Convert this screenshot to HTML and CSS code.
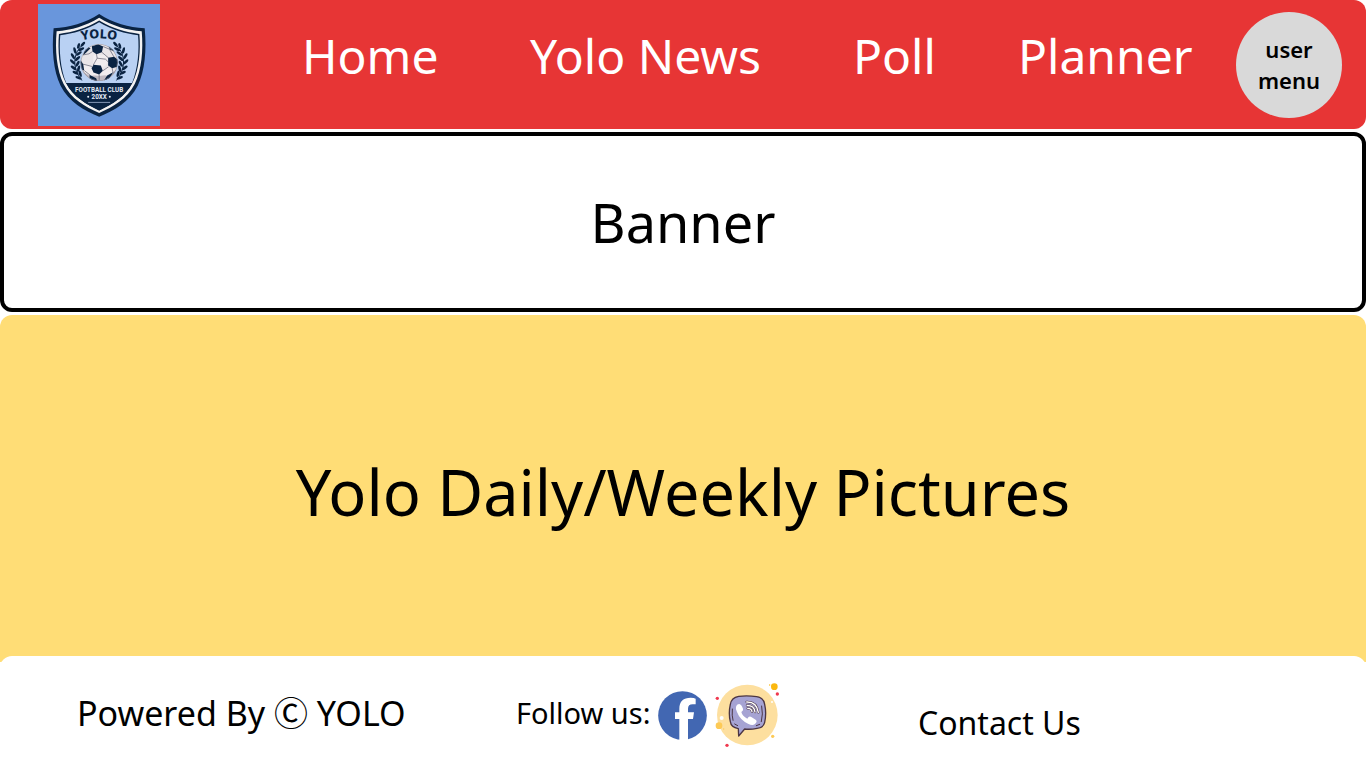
FILE: index.html
```html
<!DOCTYPE html>
<html lang="en">
<head>
<meta charset="utf-8">
<meta name="viewport" content="width=device-width, initial-scale=1">
<title>Yolo Football Club</title>
<link rel="stylesheet" href="styles.css">
</head>
<body>
<header class="site-header">
  <a class="logo" href="#" aria-label="Yolo Football Club">
    <svg viewBox="23 11 367 367" aria-hidden="true">
      <rect x="23" y="11" width="367" height="367" fill="#6996dc"/>
      <path d="M207 41C165 68 118 81 70 84C64 150 69 211 91 257C116 306 161 331 207 350C253 331 298 306 323 257C345 211 350 150 344 84C296 81 249 68 207 41Z" fill="#0a2342"/>
      <path d="M207 52C166 77 124 89 79 93C74 150 79 209 100 252C123 297 165 321 207 339C249 321 291 297 314 252C335 209 340 150 335 93C290 89 248 77 207 52Z" fill="#f3f2f2"/>
      <path d="M207 61C167 85 128 96 86 101C82 150 86 207 107 249C129 291 168 313 207 331C246 313 285 291 307 249C328 207 332 150 328 101C286 96 247 85 207 61Z" fill="#0a2342"/>
      <path d="M207 66C168 89 130 100 90 105C86 150 90 205 108 249H306C324 205 328 150 324 105C284 100 246 89 207 66Z" fill="#b9d1f3"/>
      <defs>
        <path id="arc" d="M145 123Q207 105 269 123"/>
        <g id="leaf-branch" fill="#0a2342">
          <path d="M162 130C126 157 125 204 155 241" fill="none" stroke="#0a2342" stroke-width="3"/>
          <ellipse cx="158" cy="132" rx="9" ry="4" transform="rotate(-45 158 132)"/>
          <ellipse cx="145" cy="137" rx="9" ry="4" transform="rotate(-75 145 137)"/>
          <ellipse cx="153" cy="147" rx="10" ry="4" transform="rotate(-25 153 147)"/>
          <ellipse cx="134" cy="151" rx="10" ry="4" transform="rotate(75 134 151)"/>
          <ellipse cx="146" cy="160" rx="10" ry="4" transform="rotate(-35 146 160)"/>
          <ellipse cx="128" cy="168" rx="10" ry="4" transform="rotate(60 128 168)"/>
          <ellipse cx="142" cy="175" rx="10" ry="4" transform="rotate(-45 142 175)"/>
          <ellipse cx="127" cy="185" rx="10" ry="4" transform="rotate(45 127 185)"/>
          <ellipse cx="142" cy="191" rx="10" ry="4" transform="rotate(-60 142 191)"/>
          <ellipse cx="130" cy="203" rx="10" ry="4" transform="rotate(35 130 203)"/>
          <ellipse cx="145" cy="206" rx="10" ry="4" transform="rotate(-75 145 206)"/>
          <ellipse cx="136" cy="218" rx="10" ry="4" transform="rotate(25 136 218)"/>
          <ellipse cx="150" cy="221" rx="10" ry="4" transform="rotate(75 150 221)"/>
          <ellipse cx="145" cy="233" rx="10" ry="4" transform="rotate(20 145 233)"/>
        </g>
        <clipPath id="ball"><circle cx="207" cy="187" r="56"/></clipPath>
      </defs>
      <text class="crest-name" text-anchor="middle"><textPath href="#arc" startOffset="50%">YOLO</textPath></text>
      <use href="#leaf-branch"/>
      <use href="#leaf-branch" transform="translate(414 0) scale(-1 1)"/>
      <g clip-path="url(#ball)">
        <circle cx="207" cy="187" r="56" fill="#e9e5e8"/>
        <path d="M151 205Q207 250 263 205V250H151Z" fill="#bfb9c1"/>
        <path d="M162 190L187 197L205 222L180 228L159 214ZM211 222L229 201L254 208L241 229ZM190 165L225 164L235 181L226 197L207 206L188 195Z" fill="#f1edef"/>
        <g fill="#0a2342">
          <path d="M185 138L204 132L219 139L215 156L199 162L187 154Z"/>
          <path d="M164 159L177 155L188 166L187 187L174 190L155 190L150 174Z" fill="#e9e5e8"/>
          <path d="M234 173L252 170L265 180L262 200L246 204L234 196Z"/>
          <path d="M190 194L212 196L218 212L207 223L190 217L184 204Z"/>
          <path d="M150 178L159 192L162 211L149 207Z"/>
          <path d="M233 132L252 146L254 155L239 148Z"/>
          <path d="M178 224L198 234L202 245L178 238ZM231 226L249 216L237 237L221 242Z"/>
          <path d="M164 149L174 140L181 144L169 156L158 166Z"/>
        </g>
        <path d="M187 154L176 161L159 164M199 162L201 174L189 195M215 156L236 174M201 174L226 177L234 185M219 139L238 147L252 171M159 192L186 199M218 212L235 200M207 223L207 239M246 204L249 219M162 211L181 226" fill="none" stroke="#56576a" stroke-width="2"/>
        <circle cx="207" cy="187" r="55" fill="none" stroke="#8c8994" stroke-width="2"/>
      </g>
      <path d="M108 249H306C285 291 246 313 207 331C168 313 129 291 108 249Z" fill="#0a2342"/>
      <text class="crest-club" x="207" y="275" text-anchor="middle">FOOTBALL CLUB</text>
      <text class="crest-club" x="207" y="297" text-anchor="middle">20XX</text>
      <circle cx="174" cy="290" r="3" fill="#e6edf7"/>
      <circle cx="239" cy="290" r="3" fill="#e6edf7"/>
      <path d="M174 307H240" stroke="#8598b5" stroke-width="3"/>
    </svg>
  </a>
  <nav class="main-nav" aria-label="Main">
    <a href="#">Home</a>
    <a href="#">Yolo News</a>
    <a href="#">Poll</a>
    <a href="#">Planner</a>
  </nav>
  <button class="user-menu" type="button">user<br>menu</button>
</header>

<main class="content">
  <section class="banner"><h1>Banner</h1></section>
  <section class="pictures"><h2>Yolo Daily/Weekly Pictures</h2></section>
</main>

<footer class="site-footer">
  <p class="powered">Powered By Ⓒ YOLO</p>
  <div class="follow">
    <span class="follow-label">Follow us:</span>
    <a class="facebook" href="#" aria-label="Facebook">
      <svg viewBox="26 48 147 147" aria-hidden="true">
        <circle cx="99.500" cy="121.500" r="73" fill="#4267b2"/>
        <path d="M90 195V132H77V112H90V101C90 79 102 68 124 68Q134 68 139 71V88H130Q116 88 116 101V112H134L131 132H116V195Z" fill="#fff"/>
      </svg>
    </a>
    <a class="viber" href="#" aria-label="Viber">
      <svg viewBox="195 22 195 198" aria-hidden="true">
        <circle cx="292" cy="121" r="91" fill="#fddf9f"/>
        <circle cx="373" cy="36" r="10" fill="#fbb80f"/>
        <circle cx="359" cy="31" r="2" fill="#fbb80f"/>
        <circle cx="382" cy="58" r="5" fill="#f0394f"/>
        <circle cx="202" cy="71" r="5" fill="#f0394f"/>
        <circle cx="231" cy="212" r="5" fill="#f0394f"/>
        <circle cx="207" cy="153" r="10" fill="#fdca56"/>
        <circle cx="221" cy="163" r="2" fill="#fdca56"/>
        <circle cx="368" cy="185" r="5" fill="#fdca56"/>
        <circle cx="215" cy="130" r="6" fill="#fff"/>
        <circle cx="366" cy="82" r="3" fill="#fff"/>
        <path d="M266 65Q293 62 320 66Q341 69 344 89Q350 116 344 143Q340 160 321 161Q302 165 284 163L266 184L265 162Q243 158 241 141Q235 116 241 89Q244 69 266 65Z" fill="#a6a3d3" stroke="#4b3543" stroke-width="4" stroke-linejoin="round"/>
        <path d="M247 103Q245 123 249 137M254 148L263 153M335 94Q340 118 334 141M329 149L319 153" fill="none" stroke="#4b3543" stroke-width="3" stroke-linecap="round"/>
        <path d="M258 97Q260 88 268 88Q274 89 279 102Q281 108 274 112Q277 125 292 132Q297 123 304 127L318 136Q323 141 314 149Q307 154 294 147Q270 136 261 112Q256 103 258 97Z" fill="#fff"/>
        <path d="M290 82Q320 81 325 113M291 92Q313 92 315 112M293 101Q305 101 306 111" fill="none" stroke="#4b3543" stroke-width="7" stroke-linecap="round"/>
        <path d="M290 82Q320 81 325 113M291 92Q313 92 315 112M293 101Q305 101 306 111" fill="none" stroke="#fff" stroke-width="4" stroke-linecap="round"/>
      </svg>
    </a>
  </div>
  <a class="contact" href="#">Contact Us</a>
</footer>
</body>
</html>
```

FILE: styles.css
```css
* {
  box-sizing: border-box;
}

body {
  display: flex;
  flex-direction: column;
  min-height: 100vh;
  margin: 0;
  background: #fff;
  color: #000;
  font-family: "Noto Sans", "Noto Sans CJK SC", sans-serif;
}

h1,
h2,
p {
  margin: 0;
  font-weight: 400;
}

a {
  color: inherit;
  text-decoration: none;
}

svg {
  display: block;
  width: 100%;
}

.site-header {
  display: flex;
  align-items: center;
  padding: 4px 24px 3px 38px;
  border-radius: 12px;
  background: #e73535;
}

.logo {
  flex: none;
  width: 122px;
}

.crest-name {
  fill: #0a2342;
  font: 800 38px "Noto Sans", sans-serif;
}

.crest-club {
  fill: #e6edf7;
  font: 700 19px Roboto, sans-serif;
}

.main-nav {
  display: grid;
  flex: 1;
  grid-template-columns: 228fr 323fr 165fr 218fr;
  padding: 0 0 18px 142px;
  color: #fff;
  font-size: 48px;
  line-height: 64px;
  white-space: nowrap;
}

.user-menu {
  flex: none;
  width: 106px;
  height: 106px;
  padding: 0;
  border: 0;
  border-radius: 50%;
  background: #d9d9d9;
  color: #000;
  font: 600 22px/31px "Noto Sans", sans-serif;
}

.content {
  display: flex;
  flex: 1;
  flex-direction: column;
  gap: 3px;
  padding-top: 3px;
}

.banner {
  display: grid;
  place-items: center;
  min-height: 180px;
  border: 4px solid #000;
  border-radius: 12px;
}

.banner h1 {
  font-size: 54px;
  line-height: 72px;
}

.pictures {
  display: grid;
  flex: 1;
  place-items: center;
  margin-bottom: -6px;
  padding-top: 6px;
  border-radius: 12px 12px 0 0;
  background: #ffdd76;
}

.pictures h2 {
  font-size: 63px;
  line-height: 88px;
}

.site-footer {
  position: relative;
  display: grid;
  grid-template-columns: 439fr 402fr 448fr;
  align-items: center;
  min-height: 112px;
  padding-left: 77px;
  border-radius: 12px 12px 0 0;
  background: #fff;
}

.powered {
  padding-top: 2px;
  font-size: 34px;
  line-height: 48px;
}

.follow {
  display: flex;
  align-items: center;
  gap: 8px;
  padding-top: 6px;
  font-size: 29px;
  line-height: 40px;
}

.follow-label {
  padding-bottom: 4px;
}

.facebook {
  width: 49px;
}

.viber {
  width: 65px;
}

.contact {
  padding-top: 22px;
  font-size: 32px;
  line-height: 40px;
}
```
